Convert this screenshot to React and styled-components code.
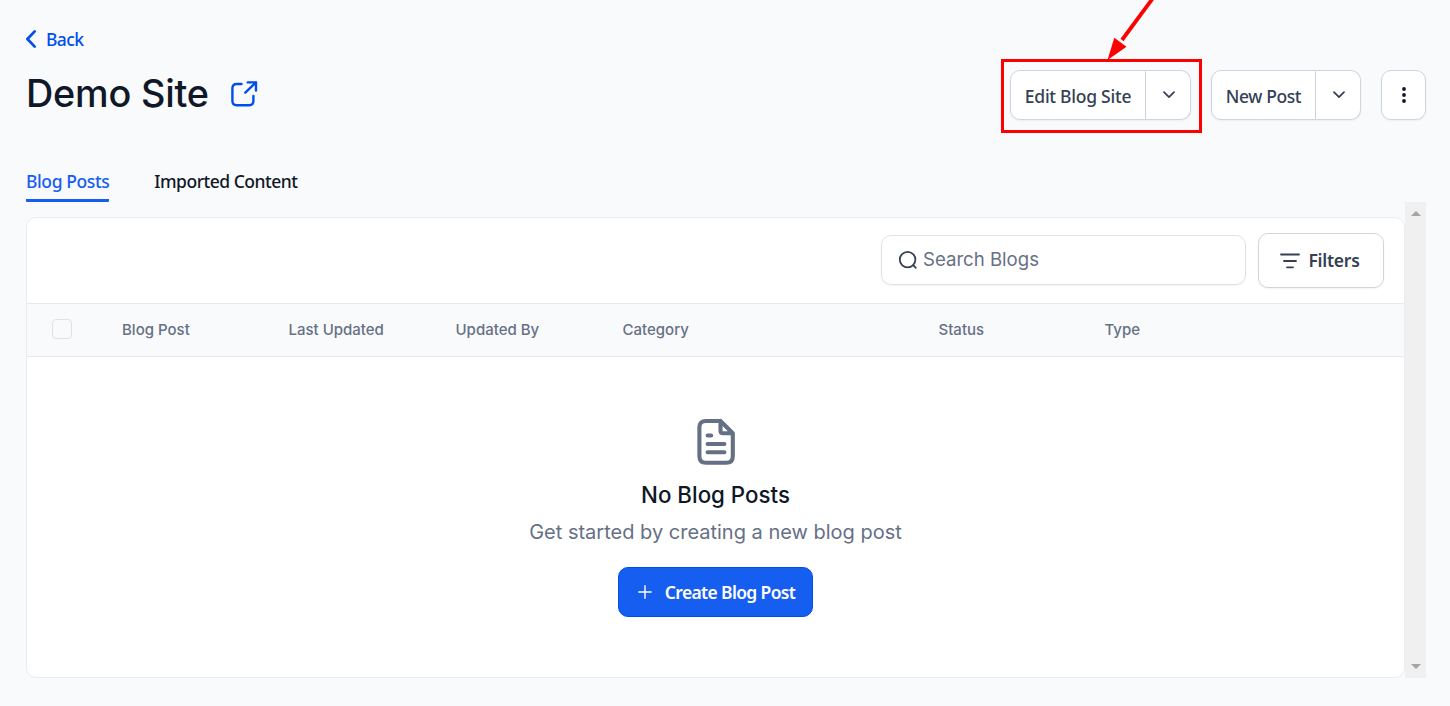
import React from 'react'
import styled, { createGlobalStyle } from 'styled-components';

const columns = ['Blog Post', 'Last Updated', 'Updated By', 'Category', 'Status', 'Type'];

const ChevronDown = () => (
  <svg width="14" height="8" viewBox="0 0 14 8" fill="none" stroke="#344054" strokeWidth="1.7" strokeLinecap="round" strokeLinejoin="round">
    <path d="M2 1.2 7 6.2 12 1.2" />
  </svg>
);

const SplitButton = ({ label, width, spacing, highlighted }) => (
  <Split>
    <SplitMain $width={width}><Label $spacing={spacing}>{label}</Label></SplitMain>
    <SplitToggle><ChevronDown /></SplitToggle>
    {highlighted && (
      <>
        <Highlight />
        <Arrow width="60" height="62" viewBox="0 0 60 62">
          <path d="M53 -2 22 40" stroke="#ff0000" strokeWidth="3.8" />
          <path d="M7.5 60 14.3 37.8 26.5 46.8Z" fill="#ff0000" />
        </Arrow>
      </>
    )}
  </Split>
);

const App = () => {
  return (
    <>
      <GlobalStyle />
      <Page>
        <Header>
          <div>
            <Back>
              <svg width="12" height="20" viewBox="0 0 12 20" fill="none" stroke="#004eeb" strokeWidth="2.7" strokeLinecap="round" strokeLinejoin="round">
                <path d="M8.7 2.4 1.4 10 8.7 17.6" />
              </svg>
              <Label $spacing="-0.6px">Back</Label>
            </Back>
            <Title>
              <h1>Demo Site</h1>
              <svg width="28" height="28" viewBox="0 0 28 28" fill="none" stroke="#004eeb" strokeWidth="2.4" strokeLinecap="round" strokeLinejoin="round">
                <path d="M11.5 4H6.6Q2.4 4 2.4 8.2V21.1Q2.4 25.3 6.6 25.3H19.2Q23.4 25.3 23.4 21.1V16" />
                <path d="M17.7 2.4H26V10.6M26 2.4 15.3 12.6" />
              </svg>
            </Title>
          </div>
          <Actions>
            <SplitButton label="Edit Blog Site" width="136px" spacing="-0.25px" highlighted />
            <SplitButton label="New Post" width="105px" spacing="-0.4px" />
            <MoreButton>
              <svg width="6" height="18" viewBox="0 0 6 18" fill="#101828">
                <circle cx="3" cy="3" r="1.9" />
                <circle cx="3" cy="9" r="1.9" />
                <circle cx="3" cy="15" r="1.9" />
              </svg>
            </MoreButton>
          </Actions>
        </Header>

        <Tabs>
          <Tab $active><Label $spacing="-0.4px">Blog Posts</Label></Tab>
          <Tab><Label $spacing="-0.5px">Imported Content</Label></Tab>
        </Tabs>

        <Scroller>
          <Card>
            <Toolbar>
              <Search>
                <svg width="20" height="20" viewBox="0 0 20 20" fill="none" stroke="#344054" strokeWidth="1.8" strokeLinecap="round">
                  <circle cx="9.6" cy="9.6" r="7.8" />
                  <path d="M15.2 15.2 17.8 17.8" />
                </svg>
                <span>Search Blogs</span>
              </Search>
              <FilterButton>
                <svg width="20" height="16" viewBox="0 0 20 16" fill="none" stroke="#344054" strokeWidth="1.8" strokeLinecap="round">
                  <path d="M1 1.5H19M4 8H16M7 14.3H13" />
                </svg>
                <Label $weight="600" $spacing="-0.25px">Filters</Label>
              </FilterButton>
            </Toolbar>
            <TableHead>
              <Checkbox />
              {columns.map((column) => (
                <span key={column}>{column}</span>
              ))}
            </TableHead>
            <Empty>
              <svg width="40" height="48" viewBox="0 0 40 48" fill="none" stroke="#667085" strokeWidth="4.1" strokeLinecap="round" strokeLinejoin="round">
                <path d="M24.5 3H10Q3.4 3 3.4 9.6V38.2Q3.4 44.8 10 44.8H30.2Q36.8 44.8 36.8 38.2V15.3L24.5 3V12.8Q24.5 15.3 27 15.3H36.8" />
                <path d="M11.6 17.5H15.2M11.6 26H28.4M11.6 34.3H28.4" />
              </svg>
              <h2>No Blog Posts</h2>
              <p>Get started by creating a new blog post</p>
              <CreateButton>
                <svg width="14" height="14" viewBox="0 0 14 14" fill="none" stroke="#ffffff" strokeWidth="1.4" strokeLinecap="round">
                  <path d="M7 .8V13.2M.8 7H13.2" />
                </svg>
                <Label $weight="600" $spacing="-0.65px">Create Blog Post</Label>
              </CreateButton>
            </Empty>
          </Card>
          <Scrollbar>
            <svg width="10" height="5" viewBox="0 0 10 5" fill="#a3a3a3"><path d="M0 5 5 0 10 5Z" /></svg>
            <svg width="10" height="5" viewBox="0 0 10 5" fill="#a3a3a3"><path d="M0 0 5 5 10 0Z" /></svg>
          </Scrollbar>
        </Scroller>
      </Page>
    </>
  )
}

export default App;

const GlobalStyle = createGlobalStyle`
  * {
    box-sizing: border-box;
  }
  body {
    margin: 0;
    background: #f9fafc;
    font-family: Inter, sans-serif;
    color: #101828;
  }
  h1, h2, p {
    margin: 0;
    font-weight: 400;
  }
  button {
    font: inherit;
    color: inherit;
    padding: 0;
  }
  svg {
    display: block;
    flex: none;
  }
`

const Page = styled.main`
  height: 706px;
  padding: 28px 24px 28px 26px;
  display: flex;
  flex-direction: column;
`

const Label = styled.span`
  font-family: "Noto Sans", "Open Sans", sans-serif;
  font-size: 17.5px;
  font-weight: ${({ $weight }) => $weight || 500};
  line-height: 24px;
  letter-spacing: ${({ $spacing }) => $spacing || '-0.3px'};
  white-space: nowrap;
`

const Header = styled.header`
  height: 136px;
  display: flex;
  justify-content: space-between;
`

const Back = styled.a`
  height: 22px;
  display: flex;
  align-items: center;
  gap: 8px;
  color: #004eeb;
`

const Title = styled.div`
  margin-top: 20px;
  display: flex;
  align-items: center;
  gap: 21px;
  h1 {
    margin-top: -1px;
    padding-bottom: 1px;
    font-size: 37.8px;
    font-weight: 450;
    letter-spacing: -0.2px;
    line-height: 48px;
    white-space: nowrap;
  }
`

const Actions = styled.div`
  margin-top: 42px;
  height: 50px;
  display: flex;
  gap: 20px;
`

const Split = styled.div`
  position: relative;
  display: flex;
  color: #344054;
`

const SplitMain = styled.button`
  width: ${({ $width }) => $width};
  padding-top: 2px;
  border: 1px solid #d0d5dd;
  border-radius: 10px 0 0 10px;
  background: #fff;
  box-shadow: 0 1px 2px rgba(16, 24, 40, 0.05);
`

const SplitToggle = styled.button`
  width: 45px;
  padding-left: 1px;
  display: flex;
  align-items: center;
  justify-content: center;
  border: 1px solid #d0d5dd;
  border-left: 0;
  border-radius: 0 10px 10px 0;
  background: #fff;
  box-shadow: 0 1px 2px rgba(16, 24, 40, 0.05);
`

const Highlight = styled.div`
  position: absolute;
  inset: -11px -11px -13px -9px;
  border: 3px solid #ff0000;
`

const Arrow = styled.svg`
  position: absolute;
  top: -70px;
  left: 90px;
`

const MoreButton = styled.button`
  width: 45px;
  display: flex;
  align-items: center;
  justify-content: center;
  border: 1px solid #d0d5dd;
  border-radius: 10px;
  background: #fff;
  box-shadow: 0 1px 2px rgba(16, 24, 40, 0.05);
`

const Tabs = styled.nav`
  height: 38px;
  display: flex;
  gap: 45px;
`

const Tab = styled.a`
  padding-top: 5px;
  border-bottom: 3px solid ${({ $active }) => ($active ? '#155eef' : 'transparent')};
  border-radius: 1px;
  color: ${({ $active }) => ($active ? '#155eef' : '#101828')};
`

const Scroller = styled.section`
  height: 476px;
  display: flex;
`

const Card = styled.div`
  flex: 1;
  margin-top: 15px;
  border: 1px solid #eaecf0;
  border-radius: 10px;
  background: #fff;
  overflow: hidden;
`

const Toolbar = styled.div`
  height: 85px;
  padding: 15px 20px 15px 0;
  display: flex;
  justify-content: flex-end;
  gap: 12px;
`

const Search = styled.div`
  width: 365px;
  height: 50px;
  margin-top: 2px;
  padding-left: 16px;
  display: flex;
  align-items: center;
  gap: 5px;
  border: 1px solid #e0e2e8;
  border-radius: 10px;
  box-shadow: 0 1px 2px rgba(16, 24, 40, 0.05);
  span {
    padding-bottom: 2px;
    font-size: 18.6px;
    color: #667085;
  }
`

const FilterButton = styled.button`
  width: 126px;
  height: 55px;
  padding-right: 2px;
  display: flex;
  align-items: center;
  justify-content: center;
  gap: 8px;
  border: 1px solid #d0d5dd;
  border-radius: 10px;
  background: #fff;
  color: #344054;
  box-shadow: 0 1px 2px rgba(16, 24, 40, 0.05);
  ${Label} {
    padding-bottom: 1px;
  }
`

const TableHead = styled.div`
  height: 54px;
  padding-left: 25px;
  display: grid;
  grid-template-columns: 70px 166.5px 167px 167px 316px 166px 1fr;
  align-items: center;
  border-top: 1px solid #e7e9ee;
  border-bottom: 1px solid #e7e9ee;
  background: #f9fafc;
  font-size: 15px;
  font-weight: 500;
  color: #667085;
  span {
    padding-bottom: 2px;
  }
`

const Checkbox = styled.div`
  width: 20px;
  height: 20px;
  margin-bottom: 2px;
  border: 1px solid #e0e0e6;
  border-radius: 4px;
`

const Empty = styled.div`
  padding-top: 61px;
  display: flex;
  flex-direction: column;
  align-items: center;
  h2 {
    margin-top: 14px;
    font-size: 22.3px;
    font-weight: 450;
    line-height: 30px;
  }
  p {
    margin-top: 8px;
    font-size: 20px;
    line-height: 28px;
    color: #667085;
  }
`

const CreateButton = styled.button`
  width: 195px;
  height: 50px;
  margin-top: 21px;
  padding-left: 2px;
  display: flex;
  align-items: center;
  justify-content: center;
  gap: 13px;
  border: 1px solid #004eeb;
  border-radius: 10px;
  background: #155eef;
  color: #fff;
`

const Scrollbar = styled.div`
  width: 21px;
  padding: 9px 0;
  display: flex;
  flex-direction: column;
  align-items: center;
  justify-content: space-between;
  background: #f0f0f0;
`
